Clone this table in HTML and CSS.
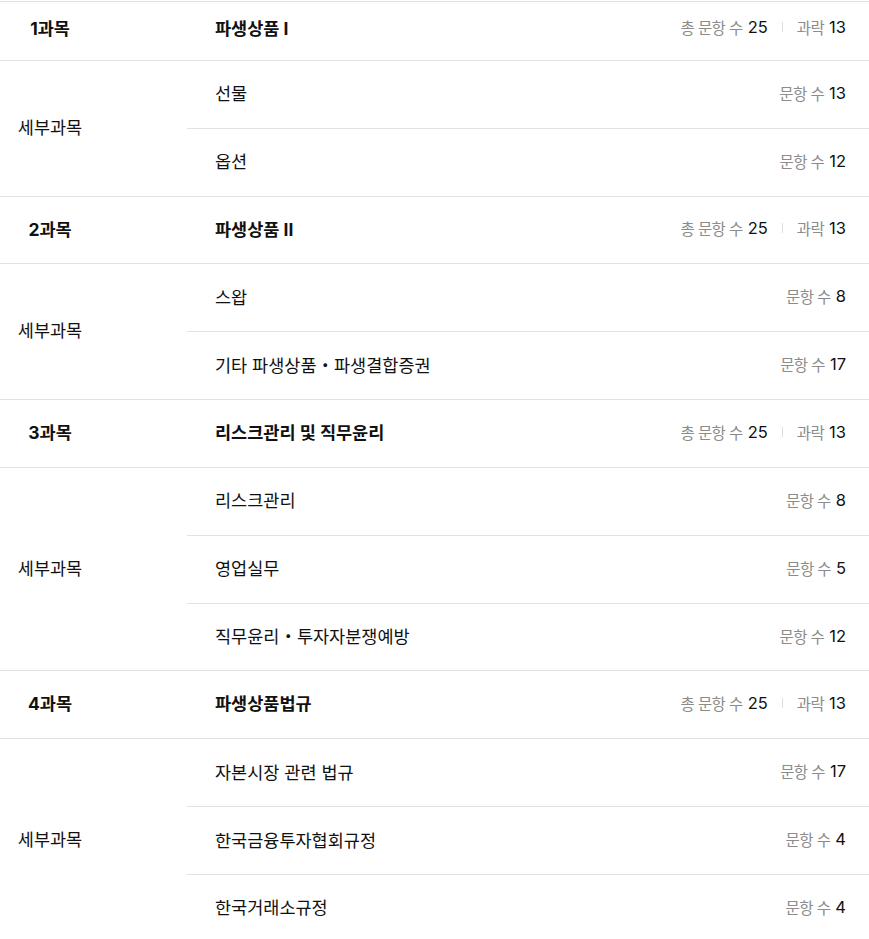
FILE: index.html
```html
<!DOCTYPE html>
<html lang="ko">
<head>
<meta charset="utf-8">
<link rel="stylesheet" href="styles.css">
</head>
<body>
<div class="table">
  <section class="subject first">
    <div class="head">
      <div class="c1">1과목</div>
      <div class="c2">파생상품 I</div>
      <div class="meta"><span class="lbl">총 문항 수</span><span class="num">25</span><i class="sep"></i><span class="lbl">과락</span><span class="num">13</span></div>
    </div>
    <div class="subs">
      <div class="c1">세부과목</div>
      <ul class="list">
        <li><span>선물</span><span class="meta"><span class="lbl">문항 수</span><span class="num">13</span></span></li>
        <li><span>옵션</span><span class="meta"><span class="lbl">문항 수</span><span class="num">12</span></span></li>
      </ul>
    </div>
  </section>
  <section class="subject">
    <div class="head">
      <div class="c1">2과목</div>
      <div class="c2">파생상품 II</div>
      <div class="meta"><span class="lbl">총 문항 수</span><span class="num">25</span><i class="sep"></i><span class="lbl">과락</span><span class="num">13</span></div>
    </div>
    <div class="subs">
      <div class="c1">세부과목</div>
      <ul class="list">
        <li><span>스왑</span><span class="meta"><span class="lbl">문항 수</span><span class="num">8</span></span></li>
        <li><span>기타 파생상품・파생결합증권</span><span class="meta"><span class="lbl">문항 수</span><span class="num">17</span></span></li>
      </ul>
    </div>
  </section>
  <section class="subject">
    <div class="head">
      <div class="c1">3과목</div>
      <div class="c2">리스크관리 및 직무윤리</div>
      <div class="meta"><span class="lbl">총 문항 수</span><span class="num">25</span><i class="sep"></i><span class="lbl">과락</span><span class="num">13</span></div>
    </div>
    <div class="subs">
      <div class="c1">세부과목</div>
      <ul class="list">
        <li><span>리스크관리</span><span class="meta"><span class="lbl">문항 수</span><span class="num">8</span></span></li>
        <li><span>영업실무</span><span class="meta"><span class="lbl">문항 수</span><span class="num">5</span></span></li>
        <li><span>직무윤리・투자자분쟁예방</span><span class="meta"><span class="lbl">문항 수</span><span class="num">12</span></span></li>
      </ul>
    </div>
  </section>
  <section class="subject">
    <div class="head">
      <div class="c1">4과목</div>
      <div class="c2">파생상품법규</div>
      <div class="meta"><span class="lbl">총 문항 수</span><span class="num">25</span><i class="sep"></i><span class="lbl">과락</span><span class="num">13</span></div>
    </div>
    <div class="subs">
      <div class="c1">세부과목</div>
      <ul class="list">
        <li><span>자본시장 관련 법규</span><span class="meta"><span class="lbl">문항 수</span><span class="num">17</span></span></li>
        <li><span>한국금융투자협회규정</span><span class="meta"><span class="lbl">문항 수</span><span class="num">4</span></span></li>
        <li><span>한국거래소규정</span><span class="meta"><span class="lbl">문항 수</span><span class="num">4</span></span></li>
      </ul>
    </div>
  </section>
</div>
</body>
</html>
```

FILE: styles.css
```css
* { box-sizing: border-box; }
html, body { margin: 0; padding: 0; background: #fff; }
body {
  font-family: Inter, "Noto Sans CJK KR", sans-serif;
  font-size: 17.5px;
  color: #111;
}
.table {
  padding-top: 1px;
  width: 869px;
}
.subject { border-top: 1px solid #e2e2e2; }
.head {
  display: flex;
  align-items: center;
  height: 67.83px;
  padding-bottom: 4px;
  border-bottom: 1px solid #e2e2e2;
  font-weight: 700;
}
.first .head { height: 59px; padding-bottom: 8px; }
.c1 {
  width: 100px;
  flex: none;
  text-align: center;
}
.head .c2 {
  margin-left: 115px;
  flex: 1;
}
.meta {
  display: flex;
  align-items: center;
  font-weight: 400;
  padding-right: 23px;
}
.lbl { color: #8c8c8c; font-size: 15.5px; letter-spacing: -0.6px; }
.num { color: #111; margin-left: 5px; font-size: 16.5px; }
.sep {
  display: inline-block;
  width: 1px;
  height: 10px;
  background: #dedede;
  margin: 0 14px;
}
.subs {
  display: flex;
  align-items: center;
}
.subs .c1 { padding-bottom: 4px; }
.list {
  list-style: none;
  margin: 0 0 0 87px;
  padding: 0;
  flex: 1;
}
.list li {
  display: flex;
  align-items: center;
  justify-content: space-between;
  height: 67.83px;
  padding-left: 28px;
  padding-bottom: 3px;
  border-top: 1px solid #e2e2e2;
}
.list li:first-child { border-top: 0; height: 66.83px; }
.list li .meta { padding-right: 23px; }
```
